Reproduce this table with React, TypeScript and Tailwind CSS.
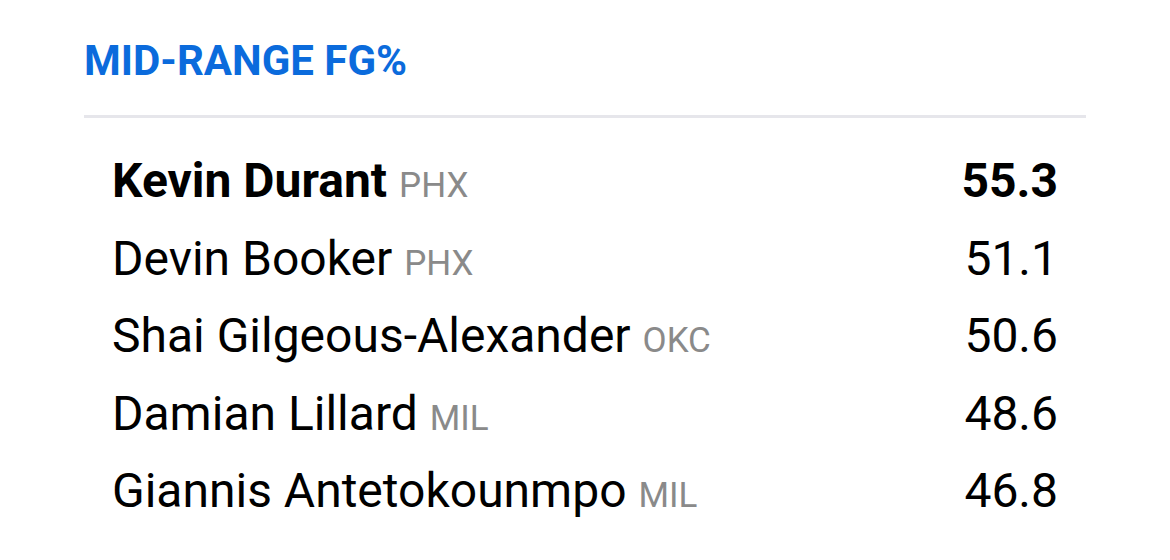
const rows = [
  { name: 'Kevin Durant', team: 'PHX', value: '55.3', lead: true },
  { name: 'Devin Booker', team: 'PHX', value: '51.1' },
  { name: 'Shai Gilgeous-Alexander', team: 'OKC', value: '50.6' },
  { name: 'Damian Lillard', team: 'MIL', value: '48.6' },
  { name: 'Giannis Antetokounmpo', team: 'MIL', value: '46.8' },
]

export default function App() {
  return (
    <div className="w-[1170px] h-[560px] bg-white px-[84px] pt-[36px]" style={{ fontFamily: 'Roboto, sans-serif' }}>
      <h2 className="text-[42px] leading-[50px] font-bold text-[#0b6bdc]">MID-RANGE FG%</h2>
      <div className="mt-[29px] h-[3px] bg-[#e6e6eb]" />
      <div className="px-[28px] pt-[33px] flex flex-col">
        {rows.map((r) => (
          <div key={r.name} className="flex items-baseline justify-between h-[77.6px] text-black">
            <div className="flex items-baseline gap-[12px]">
              <span className={`text-[48px] leading-[60px] ${r.lead ? 'font-bold' : ''}`}>{r.name}</span>
              <span className="text-[35px] text-[#8a8a8a]">{r.team}</span>
            </div>
            <span className={`text-[48px] leading-[60px] ${r.lead ? 'font-bold' : ''}`}>{r.value}</span>
          </div>
        ))}
      </div>
    </div>
  )
}
